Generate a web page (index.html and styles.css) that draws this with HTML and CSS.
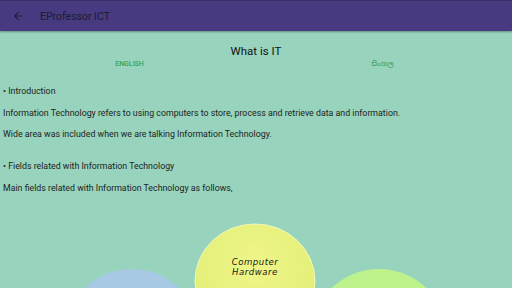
FILE: index.html
```html
<!DOCTYPE html>
<html>
<head>
<meta charset="utf-8">
<link rel="stylesheet" href="styles.css">
</head>
<body>
<header class="toolbar">
  <svg class="back" width="12" height="12" viewBox="0 0 24 24"><path d="M20 11H7.83l5.59-5.59L12 4l-8 8 8 8 1.41-1.41L7.83 13H20v-2z" fill="#1c1c30"/></svg>
  <span class="title">EProfessor ICT</span>
</header>
<main class="content">
  <h1 class="heading">What is IT</h1>
  <div class="langs">
    <span class="lang">ENGLISH</span>
    <span class="lang">සිංහල</span>
  </div>
  <p class="line first">• Introduction</p>
  <p class="line">Information Technology refers to using computers to store, process and retrieve data and information.</p>
  <p class="line">Wide area was included when we are talking Information Technology.</p>
  <p class="line gap">• Fields related with Information Technology</p>
  <p class="line">Main fields related with Information Technology as follows,</p>
  <div class="diagram">
    <svg width="512" height="88" viewBox="0 0 512 88">
      <defs>
        <radialGradient id="gy" cx="50%" cy="35%" r="65%">
          <stop offset="0" stop-color="#eef688"/>
          <stop offset="1" stop-color="#e2ee76"/>
        </radialGradient>
      </defs>
      <ellipse cx="132" cy="145" rx="72" ry="77" fill="#a8c9e4"/>
      <ellipse cx="379" cy="145" rx="72" ry="77" fill="#bef28d"/>
      <ellipse cx="255" cy="80" rx="60" ry="57" fill="url(#gy)" stroke="#f3f8b8" stroke-width="1"/>
    </svg>
    <div class="label">
      <span class="label-line">Computer</span>
      <span class="label-line">Hardware</span>
    </div>
  </div>
</main>
</body>
</html>
```
FILE: styles.css
```css
html, body {
  margin: 0;
  padding: 0;
  width: 512px;
  height: 288px;
  overflow: hidden;
  background: #98d4bd;
  font-family: Roboto, "Noto Sans", "Noto Sans Sinhala", sans-serif;
}
.toolbar {
  height: 31px;
  background: #473a80;
  border-top: 1px solid #3a2f68;
  box-sizing: border-box;
  display: flex;
  align-items: center;
  box-shadow: 0 1px 2px rgba(0,0,0,0.35);
  position: relative;
  z-index: 1;
}
.back {
  margin-left: 12px;
}
.title {
  margin-left: 16px;
  font-size: 10.5px;
  color: #1c1c30;
}
.content {
  padding: 0 3px;
}
.heading {
  margin: 0;
  padding-top: 13px;
  font-size: 11.5px;
  font-weight: normal;
  text-align: center;
  color: #111;
  line-height: 14px;
}
.langs {
  display: grid;
  grid-template-columns: 1fr 1fr;
  margin-top: 2px;
  line-height: 9px;
}
.lang {
  text-align: center;
  font-size: 7px;
  color: #3aa154;
  font-weight: 500;
}
.line {
  margin: 0;
  font-size: 8.8px;
  color: #222;
  line-height: 11px;
  margin-top: 10.5px;
}
.line.first {
  margin-top: 17px;
}
.line.gap {
  margin-top: 21px;
}
.diagram {
  position: relative;
  margin-left: -3px;
  margin-top: 7px;
  height: 88px;
}
.diagram svg {
  display: block;
}
.label {
  position: absolute;
  left: 205px;
  width: 100px;
  top: 56px;
  display: flex;
  flex-direction: column;
  align-items: center;
  font-family: "DejaVu Sans", sans-serif;
  font-style: italic;
  font-size: 8.6px;
  letter-spacing: 0.5px;
  color: #1a1a1a;
}
.label-line {
  display: block;
  line-height: 10px;
  height: 10px;
}
```
